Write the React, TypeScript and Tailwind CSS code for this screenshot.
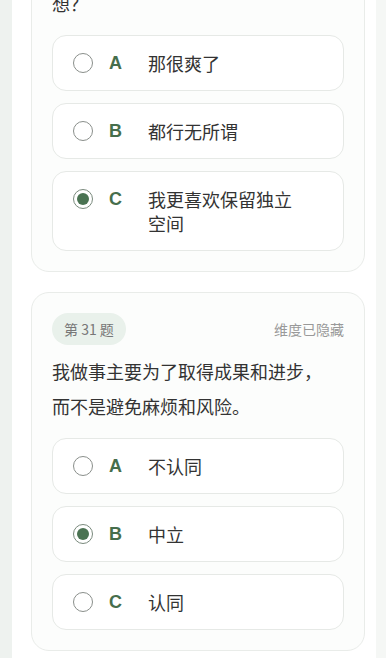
import React from "react";

const font = { fontFamily: '"Noto Sans CJK SC", "Noto Sans", sans-serif' };

type Opt = { key: string; text: string; selected?: boolean };

function Radio({ on }: { on?: boolean }) {
  return on ? (
    <span className="flex h-[20px] w-[20px] shrink-0 items-center justify-center rounded-full border-[1.5px] border-[#7a8a7d]">
      <span className="h-[12px] w-[12px] rounded-full bg-[#4a7352]" />
    </span>
  ) : (
    <span className="h-[20px] w-[20px] shrink-0 rounded-full border-[1.5px] border-[#8a8f8b]" />
  );
}

function Option({ o }: { o: Opt }) {
  return (
    <div className="flex items-start rounded-[14px] border border-[#e6e9e6] bg-white px-[20px] py-[15px]">
      <div className="flex h-[24px] items-center">
        <Radio on={o.selected} />
      </div>
      <span
        className="ml-[16px] w-[20px] shrink-0 text-[18px] font-bold leading-[24px] text-[#466e4c]"
        style={{ fontFamily: '"Liberation Sans", Arial, sans-serif' }}
      >
        {o.key}
      </span>
      <span className="ml-[19px] max-w-[155px] text-[18px] leading-[24px] text-[#333]">{o.text}</span>
    </div>
  );
}

function Card({
  num,
  q,
  opts,
}: {
  num: number;
  q: React.ReactNode;
  opts: Opt[];
}) {
  return (
    <div className="rounded-[18px] border border-[#e9ece9] bg-[#fcfdfc] px-[20px] pb-[20px] pt-[20px]">
      <div className="flex items-center justify-between">
        <span className="rounded-full bg-[#e9f1eb] px-[12px] text-[14px] leading-[32px] text-[#777]">
          第 {num} 题
        </span>
        <span className="text-[14px] text-[#999]">维度已隐藏</span>
      </div>
      <div className="mt-[9px] whitespace-nowrap text-[18px] leading-[35px] text-[#333]">{q}</div>
      <div className="mt-[14px] flex flex-col gap-[12px]">
        {opts.map((o) => (
          <Option key={o.key} o={o} />
        ))}
      </div>
    </div>
  );
}

export default function App() {
  const opts1: Opt[] = [
    { key: "A", text: "那很爽了" },
    { key: "B", text: "都行无所谓" },
    { key: "C", text: "我更喜欢保留独立空间", selected: true },
  ];
  const opts2: Opt[] = [
    { key: "A", text: "不认同" },
    { key: "B", text: "中立", selected: true },
    { key: "C", text: "认同" },
  ];
  return (
    <div className="flex h-[658px] w-[386px] overflow-hidden bg-[#eef2ef]" style={font}>
      <div className="ml-[12px] w-[364px] shrink-0 bg-white">
        <div className="mt-[-111px] flex flex-col gap-[20px] pl-[19px] pr-[11px]">
          <Card
            num={30}
            q={
              <>
                如果伴侣每天都黏着你，你会怎么
                <br />
                想？
              </>
            }
            opts={opts1}
          />
          <Card
            num={31}
            q={
              <>
                我做事主要为了取得成果和进步，
                <br />
                而不是避免麻烦和风险。
              </>
            }
            opts={opts2}
          />
        </div>
      </div>
      <div className="flex-1 bg-[#f5f7f5]" />
    </div>
  );
}
